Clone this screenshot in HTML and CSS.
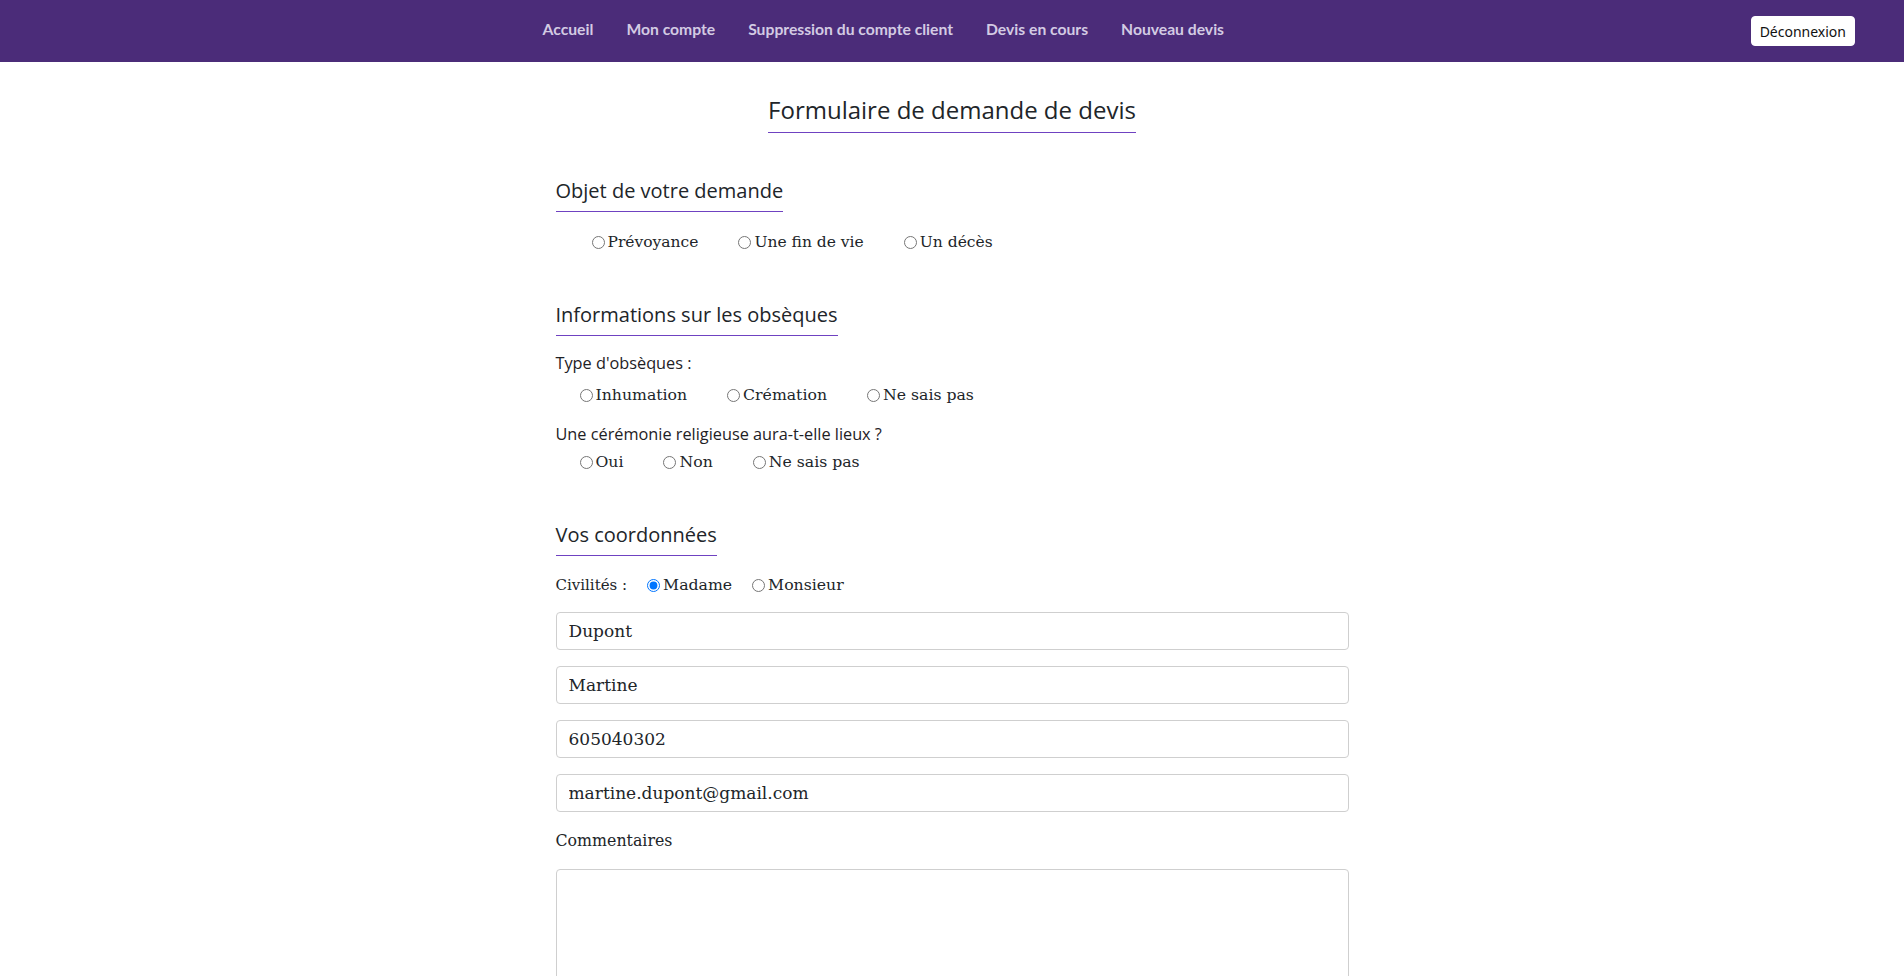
FILE: index.html
```html
<!DOCTYPE html>
<html lang="fr">
<head>
<meta charset="utf-8">
<title>Formulaire de demande de devis</title>
<link rel="stylesheet" href="styles.css">
</head>
<body>
<header class="navbar">
  <nav class="nav-links">
    <a href="#">Accueil</a>
    <a href="#">Mon compte</a>
    <a href="#">Suppression du compte client</a>
    <a href="#">Devis en cours</a>
    <a href="#">Nouveau devis</a>
  </nav>
  <button class="logout" type="button">Déconnexion</button>
</header>

<main class="page">
  <h1 class="title">Formulaire de demande de devis</h1>

  <form class="form">
    <section class="section">
      <h2 class="section-title">Objet de votre demande</h2>
      <div class="radio-row row-objet">
        <label class="radio"><input type="radio" name="objet">Prévoyance</label>
        <label class="radio"><input type="radio" name="objet">Une fin de vie</label>
        <label class="radio"><input type="radio" name="objet">Un décès</label>
      </div>
    </section>

    <section class="section">
      <h2 class="section-title">Informations sur les obsèques</h2>
      <p class="question">Type d'obsèques :</p>
      <div class="radio-row row-indent">
        <label class="radio"><input type="radio" name="type">Inhumation</label>
        <label class="radio"><input type="radio" name="type">Crémation</label>
        <label class="radio"><input type="radio" name="type">Ne sais pas</label>
      </div>
      <p class="question q2">Une cérémonie religieuse aura-t-elle lieux ?</p>
      <div class="radio-row row-indent row-tight">
        <label class="radio"><input type="radio" name="ceremonie">Oui</label>
        <label class="radio"><input type="radio" name="ceremonie">Non</label>
        <label class="radio"><input type="radio" name="ceremonie">Ne sais pas</label>
      </div>
    </section>

    <section class="section">
      <h2 class="section-title">Vos coordonnées</h2>
      <div class="civ-row">
        <span class="civ-label">Civilités :</span>
        <label class="radio"><input type="radio" name="civ" checked>Madame</label>
        <label class="radio"><input type="radio" name="civ">Monsieur</label>
      </div>
      <div class="fields">
        <input class="field" type="text" value="Dupont">
        <input class="field" type="text" value="Martine">
        <input class="field" type="text" value="605040302">
        <input class="field" type="email" value="martine.dupont@gmail.com">
      </div>
      <label class="comment-label" for="comment">Commentaires</label>
      <textarea class="comment" id="comment"></textarea>
    </section>
  </form>
</main>
</body>
</html>
```

FILE: styles.css
```css
* { box-sizing: border-box; }

body {
  margin: 0;
  background: #ffffff;
  color: #212529;
  font-family: "DejaVu Serif", "Liberation Serif", serif;
}

.navbar {
  height: 62px;
  background: #4b2c79;
  display: flex;
  align-items: center;
  padding: 0 49px 0 16px;
}

.nav-links {
  margin: 0 auto;
  display: flex;
  gap: 33px;
}

.nav-links a {
  color: #d3cbe3;
  text-decoration: none;
  font-family: "Lato", "Open Sans", sans-serif;
  font-weight: 700;
  font-size: 15.7px;
  line-height: 20px;
  margin-top: -4px;
}

.logout {
  height: 30px;
  padding: 0 8px;
  background: #ffffff;
  border: 1px solid #ffffff;
  border-radius: 4px;
  font-family: "Noto Sans", "Open Sans", sans-serif;
  font-size: 14px;
  color: #111111;
}

.page {
  width: 793px;
  margin: 0 auto;
}

.title {
  margin: 31px auto 0;
  width: max-content;
  padding-bottom: 6px;
  border-bottom: 1px solid #6f42c1;
  font-family: "Open Sans", sans-serif;
  font-weight: 400;
  font-size: 24px;
  line-height: 33px;
  color: #212529;
}

.section-title {
  display: inline-block;
  margin: 0;
  padding-bottom: 6px;
  border-bottom: 1px solid #6f42c1;
  font-family: "Open Sans", sans-serif;
  font-weight: 400;
  font-size: 20px;
  line-height: 28px;
  color: #212529;
}

.section { margin-top: 49px; }
.section:first-child { margin-top: 44px; }

.radio-row {
  display: flex;
  gap: 40px;
  font-size: 15.5px;
  line-height: 20px;
}

.row-objet { padding-left: 36px; margin-top: 20px; }
.row-indent { padding-left: 24px; margin-top: 12px; font-size: 15.7px; }
.row-tight { margin-top: 8px; }

.radio {
  display: inline-flex;
  align-items: center;
}

.radio input {
  width: 13px;
  height: 13px;
  margin: 0 3px 0 0;
}

.question {
  margin: 17px 0 0;
  font-family: "Open Sans", sans-serif;
  font-size: 16.3px;
  line-height: 20px;
  color: #1e2125;
}

.q2 { margin-top: 19px; }

.civ-row {
  display: flex;
  align-items: center;
  gap: 20px;
  margin-top: 19px;
  font-size: 15.7px;
  line-height: 20px;
}

.civ-label { font-size: 15px; }

.fields {
  display: flex;
  flex-direction: column;
  gap: 16px;
  margin-top: 17px;
}

.field {
  width: 100%;
  height: 38px;
  padding: 0 12px;
  border: 1px solid #cfcfcf;
  border-radius: 4px;
  font-family: "DejaVu Serif", "Liberation Serif", serif;
  font-size: 17px;
  color: #212529;
}

.comment-label {
  display: block;
  margin-top: 19px;
  font-size: 15.8px;
  line-height: 20px;
}

.comment {
  display: block;
  width: 100%;
  height: 150px;
  margin-top: 18px;
  border: 1px solid #cfcfcf;
  border-radius: 4px;
  resize: vertical;
}
```
